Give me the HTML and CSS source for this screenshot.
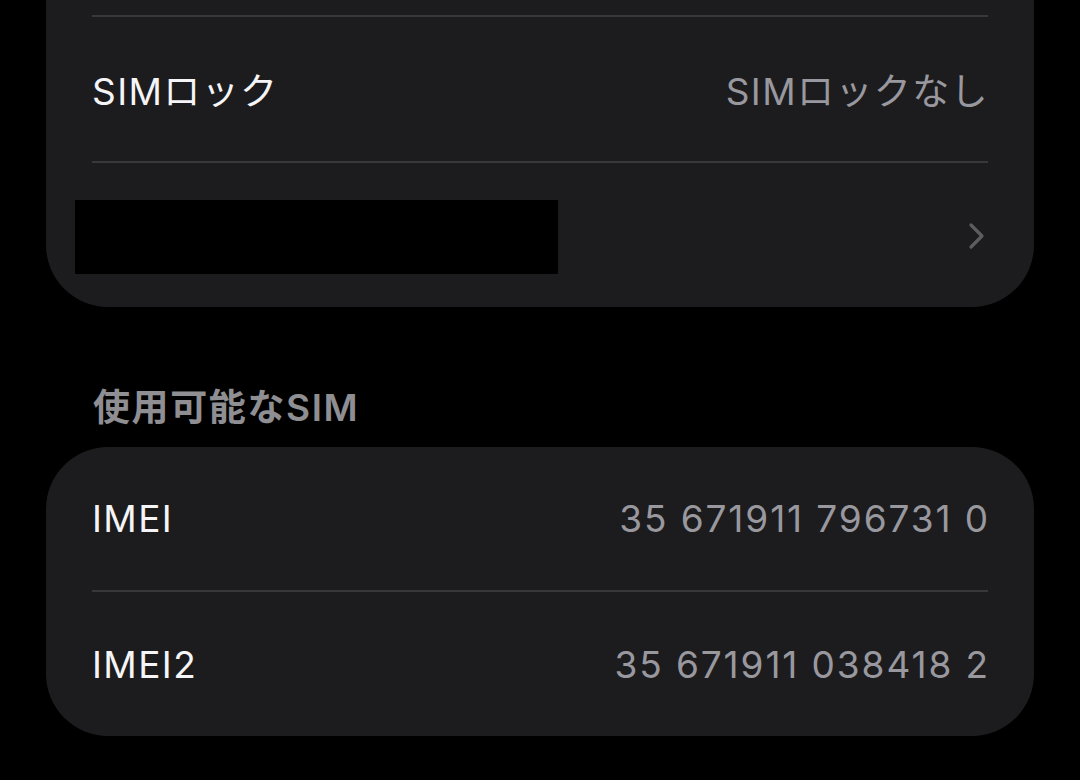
FILE: index.html
```html
<!DOCTYPE html>
<html lang="ja">
<head>
<meta charset="utf-8">
<link rel="stylesheet" href="styles.css">
</head>
<body>
<div class="page">
  <div class="card card-top">
    <div class="stub"></div>
    <div class="sep"></div>
    <div class="row">
      <span class="label">SIMロック</span>
      <span class="value">SIMロックなし</span>
    </div>
    <div class="sep"></div>
    <div class="row">
      <div class="redacted"></div>
      <svg class="chevron" width="20" height="30" viewBox="0 0 20 30"><path d="M4 4 L15 15 L4 26" fill="none" stroke="#5c5c61" stroke-width="3.2" stroke-linecap="round" stroke-linejoin="round"/></svg>
    </div>
  </div>

  <div class="section-header">使用可能なSIM</div>

  <div class="card card-full">
    <div class="row row-first">
      <span class="label">IMEI</span>
      <span class="value num">35 671911 796731 0</span>
    </div>
    <div class="sep"></div>
    <div class="row">
      <span class="label">IMEI2</span>
      <span class="value num">35 671911 038418 2</span>
    </div>
  </div>
</div>
</body>
</html>
```

FILE: styles.css
```css
html, body {
  margin: 0;
  padding: 0;
  background: #000;
}
body {
  width: 1080px;
  height: 780px;
  overflow: hidden;
  font-family: "Inter", "Noto Sans CJK JP", sans-serif;
}
.page {
  padding: 0 46px;
}
.card {
  background: #1c1c1e;
  padding: 0 46px;
}
.card-top {
  border-radius: 0 0 62px 62px;
}
.card-full {
  border-radius: 62px;
}
.stub {
  height: 15px;
}
.sep {
  height: 2px;
  background: #38383a;
}
.row {
  height: 144px;
  display: flex;
  align-items: center;
  justify-content: space-between;
}
.row-first {
  height: 143px;
}
.label {
  color: #f5f5f7;
  font-size: 37px;
  font-weight: 400;
  letter-spacing: 1.4px;
}
.value {
  color: #98989e;
  font-size: 37px;
  font-weight: 400;
  letter-spacing: 1.4px;
  margin-right: -1px;
}
.num {
  letter-spacing: 1.9px;
  margin-right: -2px;
}
.redacted {
  width: 483px;
  height: 74px;
  background: #000;
  margin-left: -17px;
  margin-top: 4px;
}
.chevron {
  margin-right: 1px;
  margin-top: 2px;
}
.section-header {
  margin-top: 76px;
  margin-bottom: 14px;
  height: 50px;
  line-height: 50px;
  padding-left: 47px;
  color: #8e8e93;
  font-size: 37px;
  font-weight: 600;
  letter-spacing: 1.6px;
}
```
